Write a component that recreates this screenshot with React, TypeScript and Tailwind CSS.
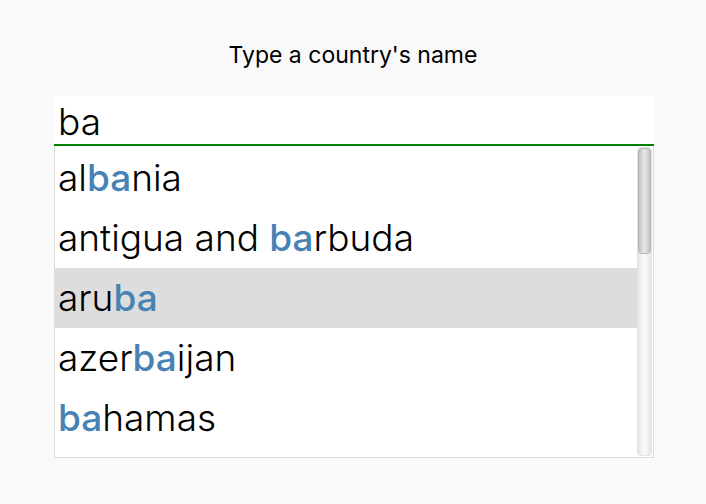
const countries = ["albania", "antigua and barbuda", "aruba", "azerbaijan", "bahamas"];

function Match({ name, q }: { name: string; q: string }) {
  const i = name.indexOf(q);
  if (i < 0) return <>{name}</>;
  return (
    <>
      {name.slice(0, i)}
      <span className="font-medium text-[#4682b4]">{name.slice(i, i + q.length)}</span>
      {name.slice(i + q.length)}
    </>
  );
}

export default function App() {
  const q = "ba";
  return (
    <div className="min-h-screen bg-[#f9f9f9] font-['Inter',sans-serif] text-black flex flex-col items-center pt-[38px]">
      <h1 className="text-[23px] leading-[34px] font-normal">Type a country's name</h1>
      <div className="mt-[24px] ml-[2px] w-[600px]">
        <input
          readOnly
          value={q}
          className="block w-full h-[50px] bg-white border-b-2 border-[#008000] px-[4px] pt-[2px] text-[37px] font-light leading-[48px] outline-none"
        />
        <div className="flex h-[312px] bg-white border border-t-0 border-[#dddddd] overflow-hidden">
          <ul className="flex-1 pt-[2px] overflow-hidden">
            {countries.map((c) => (
              <li
                key={c}
                className={`h-[60px] pl-[3px] text-[37px] font-light leading-[60px] whitespace-pre ${
                  c === "aruba" ? "bg-[#dddddd]" : ""
                }`}
              >
                <Match name={c} q={q} />
              </li>
            ))}
          </ul>
          <div className="w-[16px] py-[1px] pr-[1px] flex">
            <div className="relative flex-1 rounded-[4px] bg-gradient-to-r from-[#e6e6e6] via-[#fafafa] to-[#e6e6e6] border border-[#e2e2e2]">
              <div className="absolute left-0 right-0 top-0 h-[106px] rounded-[4px] bg-gradient-to-r from-[#c4c4c4] via-[#e8e8e8] to-[#c4c4c4] border border-[#b4b4b4]" />
            </div>
          </div>
        </div>
      </div>
    </div>
  );
}
